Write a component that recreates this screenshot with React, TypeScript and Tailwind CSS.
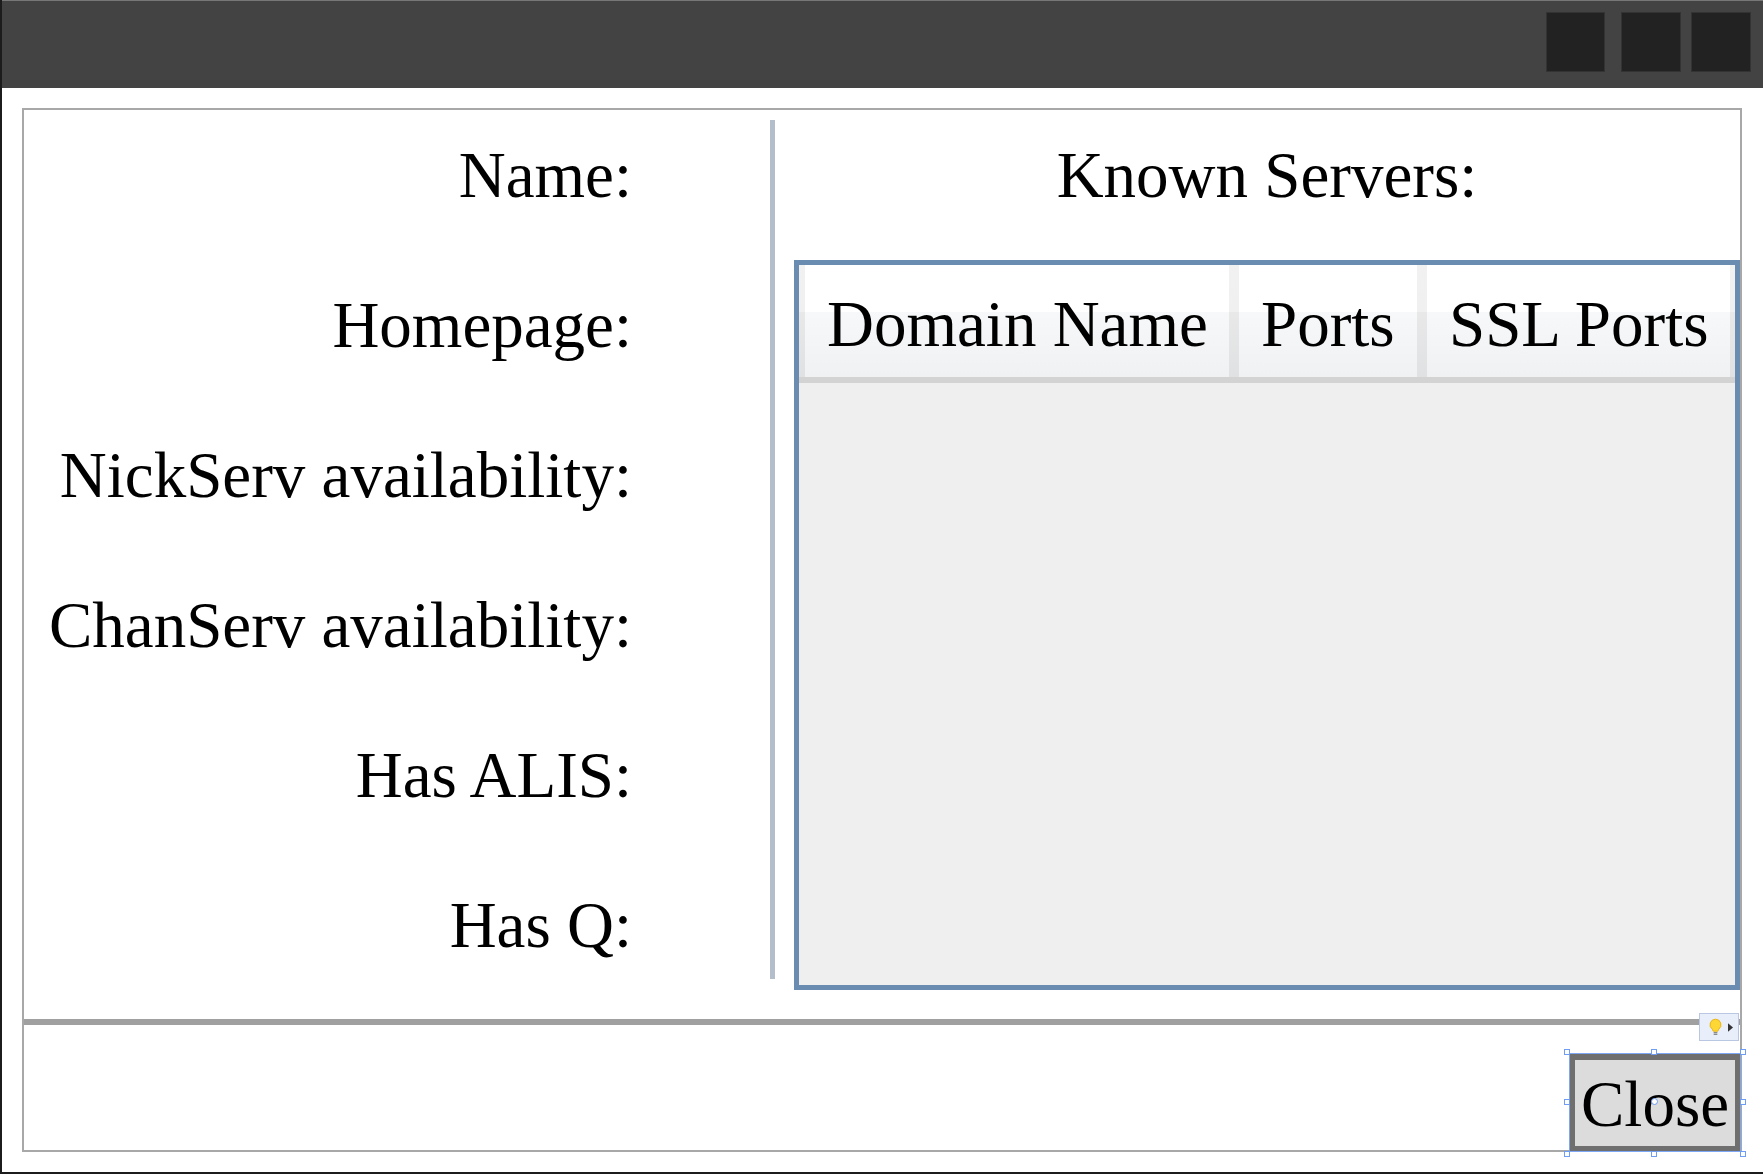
import React from "react";

const labels = ["Name:", "Homepage:", "NickServ availability:", "ChanServ availability:", "Has ALIS:", "Has Q:"];

const handles = [
  "left-[-6px] top-[-5px]",
  "left-[81px] top-[-5px]",
  "right-[-6px] top-[-5px]",
  "left-[-6px] top-[45px]",
  "right-[-6px] top-[45px]",
  "left-[-6px] bottom-[-6px]",
  "left-[81px] bottom-[-6px]",
  "right-[-6px] bottom-[-6px]",
];

function TitleButton({ className }: { className: string }) {
  return <div className={`h-[60px] border border-[#333333] bg-[#222222] ${className}`} />;
}

function HeaderCell({ label, className }: { label: string; className: string }) {
  return (
    <div className={`flex h-full items-center bg-[linear-gradient(#ffffff_0,#ffffff_47px,#f7f8f9_47px,#f0f1f3_100%)] pt-[8px] ${className}`}>
      {label}
    </div>
  );
}

function Gripper({ className }: { className: string }) {
  return <div className={`h-full bg-[linear-gradient(#f1f1f1_0,#f0f0f0_47px,#e8e8e9_47px,#e0e1e2_100%)] ${className}`} />;
}

function SmartTag() {
  return (
    <div className="absolute right-[1px] top-[-6px] flex h-[28px] w-[40px] items-center gap-[6px] border border-[#b9c7e2] bg-[#e9eefb] pl-[9px]">
      <svg width="13" height="19" viewBox="0 0 14 20">
        <path d="M7 1a6 6 0 0 0-3.5 10.8L4.5 14h5l1-2.2A6 6 0 0 0 7 1z" fill="#fdd835" stroke="#e8b10e" />
        <path d="M5 15.5h4M5 17.5h4" stroke="#8a8a8a" strokeWidth="1.4" />
      </svg>
      <svg width="5" height="9" viewBox="0 0 6 10">
        <path d="M0 0l6 5-6 5z" fill="#333333" />
      </svg>
    </div>
  );
}

function CloseButton() {
  return (
    <div className="relative -mb-[2px] -mr-[1px] h-[99px] w-[172px] border border-[#7da6f5] bg-[#6f6f6f] px-[5px] pb-[5px] pt-[6px]">
      <div className="flex h-full w-full items-center justify-center bg-[#dcdcdc] pt-[2px] text-[65px] leading-none text-black">
        Close
      </div>
      {handles.map((pos) => (
        <div key={pos} className={`absolute h-[6px] w-[6px] border border-[#6f9cf5] bg-white ${pos}`} />
      ))}
      <div className="absolute left-[81px] top-[44px] h-[7px] w-[7px] rounded-full border border-[#6f9cf5] bg-white" />
    </div>
  );
}

export default function App() {
  return (
    <div className="flex h-[1174px] w-[1763px] flex-col overflow-hidden border-b-2 border-l-2 border-[#1c1c1c] bg-white font-['Liberation_Serif',serif] text-[65px] text-black">
      <div className="flex h-[88px] shrink-0 items-start justify-end border-t border-[#777777] bg-[#434343] pr-[12px] pt-[11px]">
        <TitleButton className="mr-[16px] w-[59px]" />
        <TitleButton className="mr-[10px] w-[60px]" />
        <TitleButton className="w-[60px]" />
      </div>

      <div className="mb-[20px] ml-[20px] mr-[21px] mt-[20px] flex flex-1 flex-col border-2 border-[#a8a8a8]">
        <div className="flex h-[909px] shrink-0">
          <div className="flex w-[746px] flex-col gap-5 pr-[138px]">
            {labels.map((label) => (
              <div key={label} className="flex h-[130px] items-center justify-end whitespace-nowrap pt-[2px]">
                {label}
              </div>
            ))}
          </div>
          <div className="mt-[10px] h-[859px] w-[5px] bg-[#b4becb]" />
          <div className="flex flex-1 flex-col pl-[19px]">
            <div className="flex h-[130px] items-center justify-center pt-[2px]">Known Servers:</div>
            <div className="mt-5 flex h-[730px] flex-col border-[5px] border-[#6a8cb0] bg-[#efefef]">
              <div className="flex h-[118px] border-b-[6px] border-[#d3d3d3]">
                <Gripper className="w-[6px]" />
                <HeaderCell label="Domain Name" className="w-[424px] pl-[22px]" />
                <Gripper className="w-[10px]" />
                <HeaderCell label="Ports" className="w-[178px] pl-[22px]" />
                <Gripper className="w-[10px]" />
                <HeaderCell label="SSL Ports" className="flex-1 pl-[22px]" />
                <Gripper className="w-[5px]" />
              </div>
            </div>
          </div>
        </div>

        <div className="relative h-[6px] shrink-0 bg-[#a0a0a0]">
          <SmartTag />
        </div>

        <div className="flex flex-1 items-end justify-end">
          <CloseButton />
        </div>
      </div>
    </div>
  );
}
